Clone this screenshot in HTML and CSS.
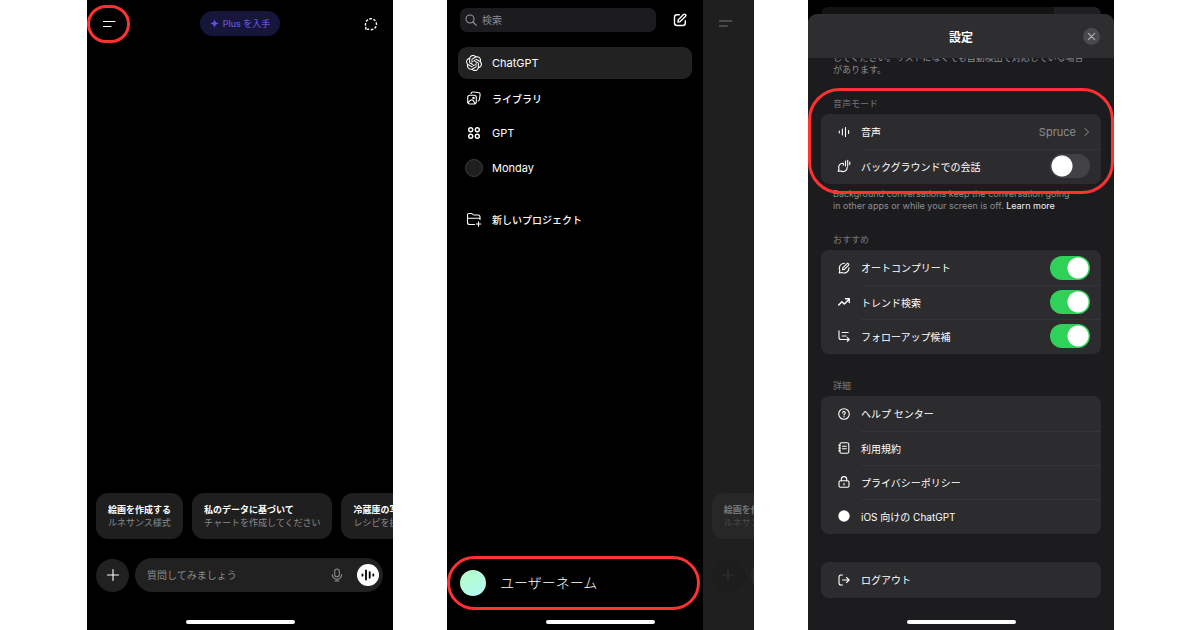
FILE: index.html
```html
<!DOCTYPE html>
<html lang="ja">
<head>
<meta charset="utf-8">
<meta name="viewport" content="width=device-width, initial-scale=1">
<title>ChatGPT 設定</title>
<link rel="stylesheet" href="styles.css">
</head>
<body>
<main class="stage">

  <section class="phone chat" aria-label="チャット">
    <header class="chat-top">
      <button class="icon-btn menu-btn" aria-label="メニュー">
        <svg width="14" height="14" viewBox="0 0 14 14" class="line"><path d="M1.500 4.500h11.500M1.500 9.500h7.500"/></svg>
        <span class="ring ring-menu"></span>
      </button>
      <button class="plus-pill">
        <svg width="9" height="9" viewBox="0 0 10 10" fill="currentColor"><path d="M5 0C5.400 3.200 6.800 4.600 10 5 6.800 5.400 5.400 6.800 5 10 4.600 6.800 3.200 5.400 0 5 3.200 4.600 4.600 3.200 5 0z"/></svg>
        Plus を入手
      </button>
      <button class="icon-btn" aria-label="一時チャット">
        <svg width="14" height="14" viewBox="0 0 14 14" class="line dashed"><path d="M1.500 12.500l.600-2.700A5.500 5.500 0 1 1 4.400 12.100z"/></svg>
      </button>
    </header>
    <div class="suggestions">
      <button class="suggestion"><b>絵画を作成する</b><span>ルネサンス様式</span></button>
      <button class="suggestion"><b>私のデータに基づいて</b><span>チャートを作成してください</span></button>
      <button class="suggestion"><b>冷蔵庫の写真から</b><span>レシピを提案する</span></button>
    </div>
    <form class="composer">
      <button type="button" class="add-btn" aria-label="追加">
        <svg width="14" height="14" viewBox="0 0 14 14" class="line"><path d="M7 1.500v11M1.500 7h11"/></svg>
      </button>
      <div class="prompt">
        <input type="text" class="prompt-input" placeholder="質問してみましょう" aria-label="質問してみましょう">
        <button type="button" class="icon-btn mic" aria-label="音声入力">
          <svg width="12" height="14" viewBox="0 0 12 14" class="line"><rect x="3.700" y="1" width="4.600" height="7.800" rx="2.300"/><path d="M1.300 6.500a4.700 4.700 0 0 0 9.400 0M6 11.200V13M4 13h4"/></svg>
        </button>
        <button type="button" class="voice-btn" aria-label="音声モード">
          <svg width="14" height="14" viewBox="0 0 14 14" class="line thick"><path d="M1.500 6.300v1.400M5 2.500v9M8.700 4.200v5.600M12.300 6.300v1.400"/></svg>
        </button>
      </div>
    </form>
    <div class="home-bar"></div>
  </section>

  <section class="phone sidebar-phone" aria-label="サイドバー">
    <div class="split">
      <nav class="drawer">
        <div class="search-row">
          <div class="search">
            <svg width="12" height="12" viewBox="0 0 12 12" class="line"><circle cx="5" cy="5" r="4"/><path d="M8 8l3.300 3.300"/></svg>
            <input type="search" class="search-input" placeholder="検索" aria-label="検索">
          </div>
          <button class="icon-btn" aria-label="新しいチャット">
            <svg width="14" height="14" viewBox="0 0 14 14" class="line bold"><path d="M6.300 1.700H4A2.500 2.500 0 0 0 1.500 4.200V10A2.500 2.500 0 0 0 4 12.500h5.800a2.500 2.500 0 0 0 2.500-2.500V7.700"/><path d="M5 9l.300-2.300 5.200-5.100a1.300 1.300 0 0 1 1.900 1.900L7.200 8.600z"/></svg>
          </button>
        </div>
        <ul class="nav-list">
          <li><a href="#chatgpt" class="nav-item latin active">
            <svg width="16" height="16" viewBox="0 0 24 24" fill="currentColor"><path d="M22.2819 9.8211a5.9847 5.9847 0 0 0-.5157-4.9108 6.0462 6.0462 0 0 0-6.5098-2.9A6.0651 6.0651 0 0 0 4.9807 4.1818a5.9847 5.9847 0 0 0-3.9977 2.9 6.0462 6.0462 0 0 0 .7427 7.0966 5.98 5.98 0 0 0 .511 4.9107 6.051 6.051 0 0 0 6.5146 2.9001A5.9847 5.9847 0 0 0 13.2599 24a6.0557 6.0557 0 0 0 5.7718-4.2058 5.9894 5.9894 0 0 0 3.9977-2.9001 6.0557 6.0557 0 0 0-.7475-7.0729zm-9.022 12.6081a4.4755 4.4755 0 0 1-2.8764-1.0408l.1419-.0804 4.7783-2.7582a.7948.7948 0 0 0 .3927-.6813v-6.7369l2.02 1.1686a.071.071 0 0 1 .038.052v5.5826a4.504 4.504 0 0 1-4.4945 4.4944zm-9.6607-4.1254a4.4708 4.4708 0 0 1-.5346-3.0137l.142.0852 4.783 2.7582a.7712.7712 0 0 0 .7806 0l5.8428-3.3685v2.3324a.0804.0804 0 0 1-.0332.0615L9.74 19.9502a4.4992 4.4992 0 0 1-6.1408-1.6464zM2.3408 7.8956a4.485 4.485 0 0 1 2.3655-1.9728V11.6a.7664.7664 0 0 0 .3879.6765l5.8144 3.3543-2.0201 1.1685a.0757.0757 0 0 1-.071 0l-4.8303-2.7865A4.504 4.504 0 0 1 2.3408 7.872zm16.5963 3.8558L13.1038 8.364 15.1192 7.2a.0757.0757 0 0 1 .071 0l4.8303 2.7913a4.4944 4.4944 0 0 1-.6765 8.1042v-5.6772a.79.79 0 0 0-.407-.667zm2.0107-3.0231l-.142-.0852-4.7735-2.7818a.7759.7759 0 0 0-.7854 0L9.409 9.2297V6.8974a.0662.0662 0 0 1 .0284-.0615l4.8303-2.7866a4.4992 4.4992 0 0 1 6.6802 4.66zM8.3065 12.863l-2.02-1.1638a.0804.0804 0 0 1-.038-.0567V6.0742a4.4992 4.4992 0 0 1 7.3757-3.4537l-.142.0805L8.704 5.459a.7948.7948 0 0 0-.3927.6813zm1.0976-2.3654l2.602-1.4998 2.6069 1.4998v2.9994l-2.5974 1.4997-2.6067-1.4997Z"/></svg>
            ChatGPT</a></li>
          <li><a href="#library" class="nav-item">
            <svg width="16" height="16" viewBox="0 0 16 16" class="line"><rect x="1.700" y="5.200" width="8.600" height="8.800" rx="2.200"/><path d="M5 3.700A2 2 0 0 1 7.200 2l5 .500a2 2 0 0 1 1.900 2.300l-.700 4.700a2 2 0 0 1-1.200 1.500M2 12.500l3-2.700c2 0 3.300 1.700 3.800 4"/><circle cx="7.500" cy="8" r=".700"/></svg>
            ライブラリ</a></li>
          <li><a href="#gpt" class="nav-item latin">
            <svg width="16" height="16" viewBox="0 0 16 16" class="line bold"><circle cx="4.700" cy="4.700" r="2"/><circle cx="11.300" cy="4.700" r="2"/><circle cx="4.700" cy="11.300" r="2"/><circle cx="11.300" cy="11.300" r="2"/></svg>
            GPT</a></li>
          <li><a href="#monday" class="nav-item latin"><span class="gpt-avatar"></span>Monday</a></li>
          <li class="nav-project"><a href="#new-project" class="nav-item">
            <svg width="16" height="16" viewBox="0 0 16 16" class="line"><path d="M8.500 13.500H3.500a2 2 0 0 1-2-2V4a1.500 1.500 0 0 1 1.500-1.500h2.200c1.500 0 1.300 1.500 2.800 1.500h4a2 2 0 0 1 2 2v2.500M1.500 7.200H14M12.500 10.700v4.600M10.200 13h4.600"/></svg>
            新しいプロジェクト</a></li>
        </ul>
        <button class="account"><span class="avatar"></span><span class="account-name">ユーザーネーム</span></button>
      </nav>
      <div class="peek" aria-hidden="true">
        <svg width="14" height="14" viewBox="0 0 14 14" class="line peek-menu"><path d="M.500 4h12.500M.500 9h7.800"/></svg>
        <div class="suggestions">
          <div class="suggestion"><b>絵画を作成する</b><span>ルネサンス様式</span></div>
        </div>
        <div class="composer">
          <div class="add-btn"><svg width="14" height="14" viewBox="0 0 14 14" class="line"><path d="M7 1.500v11M1.500 7h11"/></svg></div>
          <div class="prompt"></div>
        </div>
      </div>
    </div>
    <div class="home-bar over"></div>
  </section>

  <section class="phone settings" aria-label="設定">
    <div class="behind"><span></span></div>
    <div class="sheet">
      <header class="sheet-top">
        <h1 class="sheet-title">設定</h1>
        <button class="close-btn" aria-label="閉じる">
          <svg width="9" height="9" viewBox="0 0 9 9" class="line"><path d="M1.300 1.300l6.400 6.400M7.700 1.300L1.300 7.700"/></svg>
        </button>
      </header>
      <div class="sheet-body">
        <p class="note first">してください。リストになくても自動検出で対応している場合<br>があります。</p>

        <section class="block voice-block">
          <h2 class="label">音声モード</h2>
          <div class="group">
            <a href="#voice" class="row">
              <svg width="12" height="12" viewBox="0 0 12 12" class="line"><path d="M1.300 5v2M4.400 3v6M7.500 1.500v9M10.600 4.500v3"/></svg>
              <span class="row-main">音声<span class="value">Spruce<svg width="6" height="10" viewBox="0 0 6 10" class="line chevron"><path d="M1 1.500L4.500 5 1 8.500"/></svg></span></span>
            </a>
            <label class="row">
              <svg width="14" height="14" viewBox="0 0 14 14" class="line wide-icon"><path d="M6.300 4.300A4.100 4.100 0 0 0 2 10l-.800 2.300 2.900-.200a4.100 4.100 0 0 0 6.100-3.700M6.300 4.300v2M8.500 2v5M10.700 1.200v6M12.800 3v2.500"/></svg>
              <span class="row-main">バックグラウンドでの会話<input type="checkbox" role="switch" class="switch"></span>
            </label>
          </div>
          <span class="ring ring-voice"></span>
        </section>
        <p class="note">Background conversations keep the conversation going<br>in other apps or while your screen is off. <a href="#learn" class="learn">Learn more</a></p>

        <section class="block">
          <h2 class="label">おすすめ</h2>
          <div class="group">
            <label class="row">
              <svg width="12" height="12" viewBox="0 0 12 12" class="line"><path d="M6.500 1.200A5 5 0 0 0 1.900 8.500L1.200 11l2.600-.500A5 5 0 0 0 11 5.800M4.500 7.700l.300-1.900 4.300-4.200a1.100 1.100 0 0 1 1.500 1.500L6.400 7.400z"/></svg>
              <span class="row-main">オートコンプリート<input type="checkbox" role="switch" class="switch" checked></span>
            </label>
            <label class="row">
              <svg width="12" height="12" viewBox="0 0 12 12" class="line bold"><path d="M.700 9l3.200-3.300 2.400 2.400L11 3.400M7.500 2.800h3.800v3.700"/></svg>
              <span class="row-main">トレンド検索<input type="checkbox" role="switch" class="switch" checked></span>
            </label>
            <label class="row">
              <svg width="12" height="12" viewBox="0 0 12 12" class="line"><path d="M1 .800v6.700a2 2 0 0 0 2 2h8M9.300 7.700l1.900 1.800-1.900 1.800M4.200 2.500h6M4.200 6h4"/></svg>
              <span class="row-main">フォローアップ候補<input type="checkbox" role="switch" class="switch" checked></span>
            </label>
          </div>
        </section>

        <section class="block details">
          <h2 class="label">詳細</h2>
          <div class="group">
            <a href="#help" class="row">
              <svg width="12" height="12" viewBox="0 0 12 12" class="line"><circle cx="6" cy="6" r="5.300"/><path d="M4.700 4.900a1.300 1.300 0 1 1 1.900 1.100c-.500.300-.600.500-.600.900M6 8.300v.500"/></svg>
              <span class="row-main">ヘルプ センター</span>
            </a>
            <a href="#terms" class="row">
              <svg width="12" height="12" viewBox="0 0 12 12" class="line"><rect x="1.800" y=".700" width="9" height="10.600" rx="1.800"/><path d="M4.500 4.300h3.800M4.500 6.800h3.800M.600 3.300h1.800M.600 6h1.800M.600 8.700h1.800"/></svg>
              <span class="row-main">利用規約</span>
            </a>
            <a href="#privacy" class="row">
              <svg width="12" height="12" viewBox="0 0 12 12" class="line"><rect x="1" y="4.800" width="10" height="6.500" rx="1.500"/><path d="M3.300 4.800V3.300a2.700 2.700 0 0 1 5.400 0v1.500M6 7.200v1.800"/></svg>
              <span class="row-main">プライバシーポリシー</span>
            </a>
            <a href="#about" class="row">
              <svg width="12" height="12" viewBox="0 0 12 12" fill="#fff"><circle cx="6" cy="6" r="5.700"/></svg>
              <span class="row-main">iOS 向けの ChatGPT</span>
            </a>
          </div>
        </section>

        <div class="group logout">
          <button class="row">
            <svg width="12" height="12" viewBox="0 0 12 12" class="line"><path d="M4.500 1H3a2 2 0 0 0-2 2v6a2 2 0 0 0 2 2h1.500M4.500 6h6.500M8.600 3.500L11.100 6 8.600 8.500"/></svg>
            <span class="row-main">ログアウト</span>
          </button>
        </div>
      </div>
      <div class="home-bar"></div>
    </div>
  </section>

</main>
</body>
</html>
```

FILE: styles.css
```css
* { box-sizing: border-box; }

body {
  margin: 0;
  background: #fff;
  color: #fff;
  font-family: Inter, "Noto Sans CJK JP", sans-serif;
  font-size: 10px;
}

button, input { font: inherit; color: inherit; }
button { border: 0; padding: 0; background: none; text-align: left; }
a { color: inherit; text-decoration: none; }
h1, h2, p, ul { margin: 0; padding: 0; }
ul { list-style: none; }
svg { display: block; flex: none; }

.line {
  fill: none;
  stroke: currentColor;
  stroke-width: 1.1;
  stroke-linecap: round;
  stroke-linejoin: round;
}
.bold { stroke-width: 1.4; }
.thick { stroke-width: 1.8; }
.dashed {
  stroke-width: 1.4;
  stroke-linecap: butt;
  stroke-dasharray: 2.6 1.5;
}

.stage {
  display: grid;
  grid-template-columns: minmax(0, 306px) minmax(0, 307px) minmax(0, 306px);
  justify-content: space-between;
  min-height: 100vh;
  padding: 0 86px 0 87px;
}

.phone {
  position: relative;
  display: flex;
  flex-direction: column;
  background: #000;
}

.ring {
  position: absolute;
  border: 3px solid #ff3131;
  pointer-events: none;
}
.ring-menu { inset: -12px -14px -12px -15px; border-radius: 19px; }
.ring-voice { inset: -10px -13px; border-radius: 32px; }

.home-bar {
  flex: none;
  width: 109px;
  height: 4px;
  margin: 28px auto 6px;
  border-radius: 2px;
  background: #fff;
}
.home-bar.over {
  position: absolute;
  bottom: 0;
  left: 0;
  right: 0;
}

.icon-btn {
  display: flex;
  align-items: center;
  justify-content: center;
}

/* Chat screen */
.chat-top {
  display: flex;
  align-items: center;
  justify-content: space-between;
  height: 47px;
  padding: 0 15px;
}
.menu-btn { position: relative; }
.plus-pill {
  display: flex;
  align-items: center;
  gap: 4px;
  height: 25px;
  padding: 0 10px;
  border-radius: 13px;
  background: #17153a;
  color: #5c55dd;
  font-size: 9px;
  font-weight: 500;
}
.suggestions {
  display: flex;
  gap: 9px;
  margin-top: auto;
  padding-left: 9px;
  overflow: hidden;
}
.suggestion {
  display: flex;
  flex: none;
  flex-direction: column;
  justify-content: center;
  height: 46px;
  padding: 0 12px;
  border-radius: 12px;
  background: #1f1f1f;
  font-size: 9px;
  line-height: 13px;
  white-space: nowrap;
}
.suggestion span { color: #8a8a8a; }
.composer {
  display: flex;
  align-items: center;
  gap: 6px;
  margin-top: 19px;
  padding: 0 10px 0 9px;
}
.add-btn {
  display: flex;
  flex: none;
  align-items: center;
  justify-content: center;
  width: 33px;
  height: 33px;
  border-radius: 50%;
  background: #212121;
}
.prompt {
  display: flex;
  flex: 1;
  align-items: center;
  min-width: 0;
  height: 34px;
  padding: 0 4px 0 12px;
  border-radius: 17px;
  background: #212121;
}
.prompt-input {
  flex: 1;
  min-width: 0;
  padding: 0;
  border: 0;
  background: none;
}
.prompt-input::placeholder { color: #8a8a8a; }
.mic { margin-right: 14px; color: #8a8a8a; }
.voice-btn {
  display: flex;
  flex: none;
  align-items: center;
  justify-content: center;
  width: 22px;
  height: 22px;
  border-radius: 50%;
  background: #fff;
  color: #000;
}

/* Drawer screen */
.split { display: flex; flex: 1; }
.drawer {
  display: flex;
  flex: 5;
  flex-direction: column;
  padding-bottom: 20px;
}
.search-row {
  display: flex;
  align-items: center;
  gap: 17px;
  padding: 8px 16px 0 13px;
}
.search {
  display: flex;
  flex: 1;
  align-items: center;
  gap: 5px;
  height: 24px;
  padding: 0 5px;
  border-radius: 7px;
  background: #1c1c1e;
  color: #97979c;
}
.search-input {
  flex: 1;
  min-width: 0;
  padding: 0;
  border: 0;
  background: none;
  appearance: none;
}
.search-input::placeholder { color: #8a8a90; }
.nav-list {
  display: flex;
  flex-direction: column;
  gap: 3px;
  padding: 15px 11px 0;
}
.nav-item {
  display: flex;
  align-items: center;
  gap: 10px;
  height: 32px;
  padding: 0 8px;
  border-radius: 9px;
  font-weight: 500;
}
.latin { font-size: 11px; font-weight: 400; }
.active { background: #222; }
.nav-project { margin-top: 16px; }
.gpt-avatar {
  width: 18px;
  height: 18px;
  margin: 0 -1px;
  border: 1px solid #3c3c3c;
  border-radius: 50%;
  background: #1f1f1f;
}
.account {
  display: flex;
  align-items: center;
  gap: 14px;
  height: 54px;
  margin: auto 3px 0 0;
  padding: 0 10px;
  border: 3px solid #ff3131;
  border-radius: 27px;
  font-size: 14px;
  font-weight: 300;
}
.account-name { padding-bottom: 3px; }
.avatar {
  width: 26px;
  height: 26px;
  border-radius: 50%;
  background: linear-gradient(150deg, #b4ffc0, #b2f7fb);
}
.peek {
  display: flex;
  flex: 1;
  flex-direction: column;
  min-width: 0;
  padding-bottom: 38px;
  overflow: hidden;
  background: #1f1f1f;
  color: #777;
}
.peek-menu { margin: 17px 0 0 16px; }
.peek .suggestion { background: #272727; }
.peek .suggestion span { color: #4a4a4a; }
.peek .composer { padding-right: 0; }
.peek .add-btn { background: #1d1d1d; color: #333; }
.peek .prompt { flex: none; width: 248px; background: #282828; }

/* Settings screen */
.behind {
  display: flex;
  justify-content: flex-end;
  height: 14px;
  margin: 0 13px;
  padding-top: 7px;
}
.behind::before {
  content: "";
  flex: 5;
  border-radius: 7px 0 0;
  background: #131313;
}
.behind span {
  flex: 1;
  border-radius: 0 7px 0 0;
  background: #202022;
}
.sheet {
  display: flex;
  flex: 1;
  flex-direction: column;
  border-radius: 9px 9px 0 0;
  background: #1c1c1e;
}
.sheet-top {
  position: relative;
  z-index: 1;
  display: grid;
  grid-template-columns: 1fr auto 1fr;
  align-items: center;
  height: 44px;
  padding: 0 14px;
  border-radius: 9px 9px 0 0;
  background: #2e2e30;
}
.sheet-title {
  grid-column: 2;
  font-size: 12px;
  font-weight: 700;
}
.close-btn {
  display: flex;
  align-items: center;
  justify-content: center;
  justify-self: end;
  width: 17px;
  height: 17px;
  border-radius: 50%;
  background: #4a4a4d;
  color: #b4b4b8;
}
.sheet-body {
  display: flex;
  flex: 1;
  flex-direction: column;
  margin-top: -6px;
  padding: 0 13px;
}
.note {
  margin: 4px 0 0 12px;
  color: #8e8e93;
  font-size: 9px;
  line-height: 12px;
  white-space: nowrap;
}
.note.first { margin-top: 0; }
.learn { color: #f2f2f2; }
.block { margin-top: 22px; }
.details { margin-top: 26px; }
.voice-block { position: relative; }
.label {
  margin: 0 0 4px 12px;
  color: #77777c;
  font-size: 9px;
  font-weight: 400;
  line-height: 12px;
}
.group {
  padding: 1px 0;
  border-radius: 8px;
  background: #2c2c2e;
}
.row {
  display: flex;
  align-items: center;
  gap: 11px;
  width: 100%;
  height: 34px;
  padding-left: 17px;
}
.wide-icon { margin: 0 -1px; }
.row-main {
  display: flex;
  flex: 1;
  align-items: center;
  justify-content: space-between;
  height: 34px;
  padding: 0 11px 1px 0;
}
.row + .row .row-main { border-top: 1px solid #353538; }
.value {
  display: flex;
  align-items: center;
  gap: 8px;
  color: #8e8e93;
  font-size: 11px;
}
.chevron { color: #6a6a6f; }
.switch {
  width: 40px;
  height: 24px;
  margin: 0;
  border-radius: 12px;
  background: radial-gradient(circle at 12px 12px, #fff 10px, #0000 11px) #424246;
  appearance: none;
}
.switch:checked {
  background: radial-gradient(circle at 28px 12px, #fff 10px, #0000 11px) #30d158;
}
.logout { margin-top: 28px; }
.settings .home-bar { margin-top: 20px; }
```
